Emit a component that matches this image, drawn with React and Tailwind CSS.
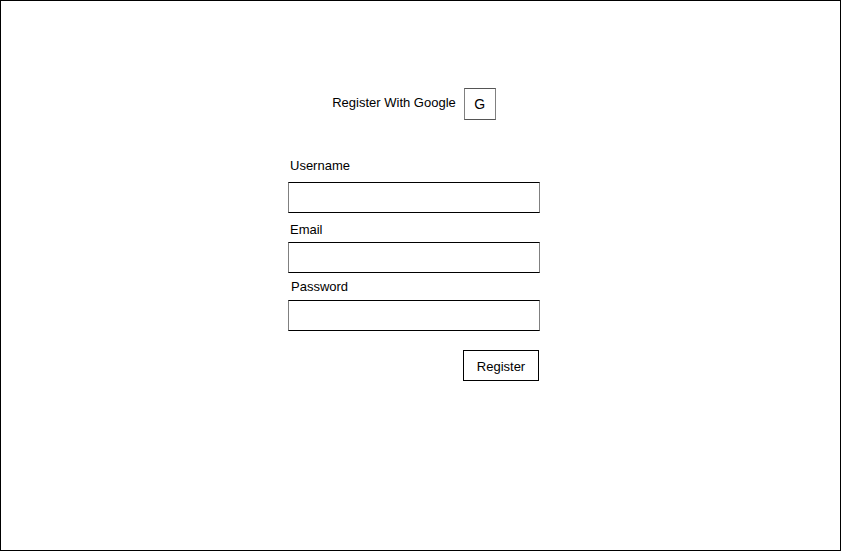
import React from 'react';

const RegisterForm = () => {
  return (
    <div className="w-[841px] h-[551px] border border-black bg-white text-black font-['Liberation_Sans',Arial,sans-serif] text-[13px] leading-[15px]">
      <div className="pl-[287px] pt-[87px]">
        <div className="w-[252px] flex flex-col">
          {/* Google sign up */}
          <div className="flex items-center justify-center gap-[8px]">
            <span className="-mt-[4px]">Register With Google</span>
            <button
              type="button"
              className="w-[32px] h-[32px] flex items-center justify-center border border-[#555] border-x-[#808080] bg-white text-[14px]"
            >
              G
            </button>
          </div>

          <label className="mt-[38px] ml-[2px]">Username</label>
          <input type="text" className="mt-[9px] w-[252px] h-[31px] border border-black border-x-[#808080] outline-none" />

          <label className="mt-[9px] ml-[2px]">Email</label>
          <input type="email" className="mt-[5px] w-[252px] h-[31px] border border-black border-x-[#808080] outline-none" />

          <label className="mt-[6px] ml-[3px]">Password</label>
          <input type="password" className="mt-[6px] w-[252px] h-[31px] border border-black border-x-[#808080] outline-none" />

          <button
            type="submit"
            className="mt-[19px] mr-[1px] self-end w-[76px] h-[31px] border border-black bg-white pt-[2px]"
          >
            Register
          </button>
        </div>
      </div>
    </div>
  );
};

export default function App() {
  return <RegisterForm />;
}
